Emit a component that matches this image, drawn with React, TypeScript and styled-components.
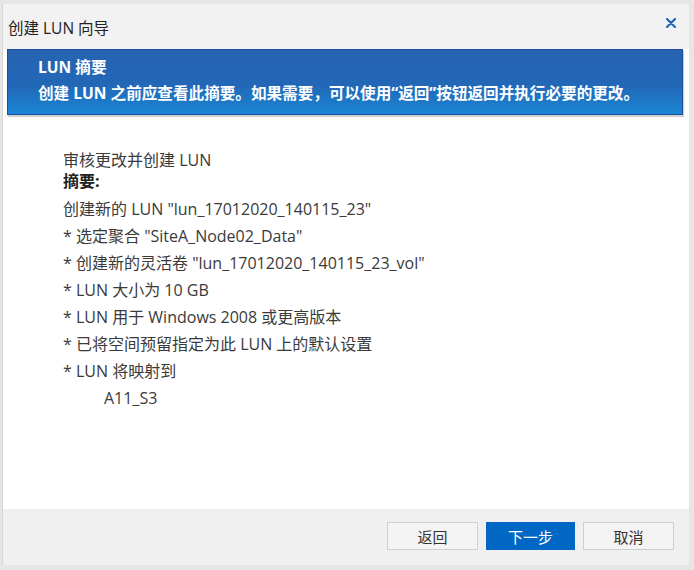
import React from "react";
import styled, { createGlobalStyle } from "styled-components";

const Global = createGlobalStyle`
  html, body { margin: 0; padding: 0; background: #e6e6e6; }
  body { font-family: "Open Sans", "Noto Sans CJK SC", sans-serif; }
`;

const Page = styled.div`
  width: 694px;
  height: 570px;
  box-sizing: border-box;
  padding: 4px 5px 5px 2px;
  display: flex;
  background: #e6e6e6;
`;

const Dialog = styled.div`
  flex: 1;
  display: flex;
  flex-direction: column;
  background: #fff;
  border-left: 1px solid #d6d6d6;
`;

const TitleBar = styled.div`
  height: 45px;
  background: #f2f2f2;
  display: flex;
  align-items: center;
  justify-content: space-between;
  padding: 2px 12px 0 5px;
  box-sizing: border-box;
`;

const Title = styled.div`
  font-size: 15.5px;
  color: #222;
`;

const Close = styled.button`
  border: 0;
  background: none;
  padding: 0;
  width: 12px;
  height: 12px;
  display: flex;
  align-items: center;
  justify-content: center;
  margin-top: -10px;
`;

const Banner = styled.div`
  margin: 0 6px 0 4px;
  height: 66px;
  box-sizing: border-box;
  border: 1px solid #1a4d9c;
  background: linear-gradient(180deg, #2663b1 0%, #2268b7 55%, #1a86d4 100%);
  box-shadow: 1px 2px 1px rgba(0, 0, 0, 0.18);
  padding: 6px 0 0 30px;
  color: #fff;
  font-weight: 700;
  font-size: 15.6px;
  display: flex;
  flex-direction: column;
  gap: 4px;
  line-height: 22px;
`;

const Body = styled.div`
  flex: 1;
  padding: 35px 0 0 60px;
  color: #3a3a3a;
  font-size: 16px;
`;

const Head = styled.div`
  line-height: 21px;
  margin-bottom: 4px;
`;

const Bold = styled.div`
  font-weight: 700;
  color: #222;
`;

const Line = styled.div<{ $indent?: boolean }>`
  line-height: 27px;
  padding-left: ${(p) => (p.$indent ? "41px" : "0")};
  white-space: nowrap;
`;

const Footer = styled.div`
  height: 56px;
  background: #f0f0f0;
  display: flex;
  justify-content: flex-end;
  align-items: flex-start;
  gap: 8px;
  padding: 13px 15px 0 0;
  box-sizing: border-box;
`;

const Button = styled.button<{ $primary?: boolean }>`
  width: ${(p) => (p.$primary ? "89px" : "91px")};
  height: 28px;
  box-sizing: border-box;
  font-family: "Open Sans", "Noto Sans CJK SC", sans-serif;
  font-size: 15px;
  border: 1px solid ${(p) => (p.$primary ? "#0a66c4" : "#cfcfcf")};
  background: ${(p) => (p.$primary ? "#0067c5" : "#f4f4f4")};
  color: ${(p) => (p.$primary ? "#fff" : "#333")};
  padding: 0;
`;

export default function App() {
  return (
    <>
      <Global />
      <Page>
        <Dialog>
          <TitleBar>
            <Title>创建 LUN 向导</Title>
            <Close aria-label="close">
              <svg width="10" height="10" viewBox="0 0 10 10">
                <path d="M1 1 L9 9 M9 1 L1 9" stroke="#1f66b8" strokeWidth="2.2" strokeLinecap="round" />
              </svg>
            </Close>
          </TitleBar>
          <Banner>
            <div>LUN 摘要</div>
            <div>创建 LUN 之前应查看此摘要。如果需要，可以使用“返回”按钮返回并执行必要的更改。</div>
          </Banner>
          <Body>
            <Head>
              <div>审核更改并创建 LUN</div>
              <Bold>摘要:</Bold>
            </Head>
            <Line>创建新的 LUN "lun_17012020_140115_23"</Line>
            <Line>* 选定聚合 "SiteA_Node02_Data"</Line>
            <Line>* 创建新的灵活卷 "lun_17012020_140115_23_vol"</Line>
            <Line>* LUN 大小为 10 GB</Line>
            <Line>* LUN 用于 Windows 2008 或更高版本</Line>
            <Line>* 已将空间预留指定为此 LUN 上的默认设置</Line>
            <Line>* LUN 将映射到</Line>
            <Line $indent>A11_S3</Line>
          </Body>
          <Footer>
            <Button>返回</Button>
            <Button $primary>下一步</Button>
            <Button>取消</Button>
          </Footer>
        </Dialog>
      </Page>
    </>
  );
}
